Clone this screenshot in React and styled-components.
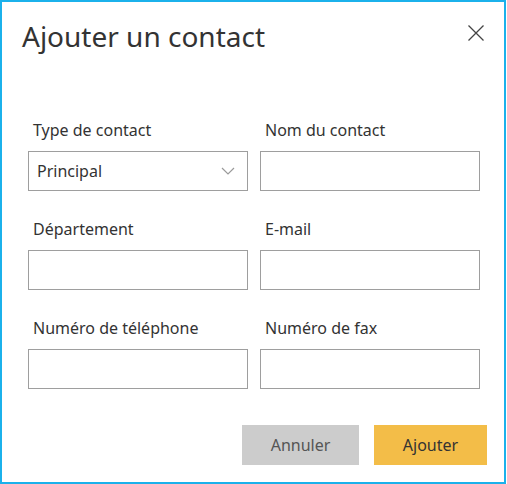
import React from 'react'
import styled, { createGlobalStyle } from 'styled-components'

const GlobalStyle = createGlobalStyle`
  body {
    margin: 0;
    background: #ffffff;
    font-family: "Noto Sans", "Liberation Sans", sans-serif;
    color: #333333;
  }
`;

const Dialog = styled.div`
  box-sizing: border-box;
  width: 506px;
  height: 484px;
  border: 2px solid #1bb1eb;
  background: #ffffff;
  display: flex;
  flex-direction: column;
`;

const Header = styled.div`
  display: flex;
  justify-content: space-between;
  align-items: flex-start;
  padding: 14px 19px 0 20px;
`;

const Title = styled.h2`
  margin: 0;
  font-size: 28px;
  font-weight: 400;
  line-height: 40px;
  color: #333333;
`;

const CloseButton = styled.button`
  border: none;
  background: none;
  padding: 0;
  margin-top: 8px;
  width: 18px;
  height: 18px;
  cursor: pointer;
  display: flex;
  color: #444444;
`;

const Form = styled.div`
  display: grid;
  grid-template-columns: 220px 220px;
  column-gap: 12px;
  row-gap: 27px;
  padding: 63px 0 0 26px;
`;

const Field = styled.div`
  display: flex;
  flex-direction: column;
`;

const Label = styled.label`
  font-size: 16px;
  line-height: 22px;
  padding-left: 5px;
  margin-bottom: 10px;
  color: #333333;
`;

const Input = styled.div`
  box-sizing: border-box;
  height: 40px;
  border: 1px solid #9e9e9e;
  display: flex;
  align-items: center;
  justify-content: space-between;
  padding: 0 12px 0 8px;
  font-size: 16px;
  color: #333333;
`;

const Footer = styled.div`
  display: flex;
  justify-content: flex-end;
  gap: 15px;
  padding: 0 17px 0 0;
  margin-top: auto;
  margin-bottom: 17px;
`;

const Button = styled.button`
  box-sizing: border-box;
  height: 40px;
  width: ${p => p.$w}px;
  border: none;
  background: ${p => p.$primary ? '#f3bd48' : '#cccccc'};
  color: ${p => p.$primary ? '#333333' : '#555555'};
  font-family: inherit;
  font-size: 16px;
  cursor: pointer;
`;

const fields = [
  { label: 'Type de contact', value: 'Principal', select: true },
  { label: 'Nom du contact' },
  { label: 'Département' },
  { label: 'E-mail' },
  { label: 'Numéro de téléphone' },
  { label: 'Numéro de fax' },
];

const Chevron = () => (
  <svg width="14" height="8" viewBox="0 0 14 8" fill="none">
    <path d="M1 1l6 6 6-6" stroke="#9a9a9a" strokeWidth="1.2" />
  </svg>
);

const App = () => {
  return (
    <>
      <GlobalStyle />
      <Dialog>
        <Header>
          <Title>Ajouter un contact</Title>
          <CloseButton aria-label="Fermer">
            <svg width="18" height="18" viewBox="0 0 18 18" fill="none">
              <path d="M1.5 1.5l15 15M16.5 1.5l-15 15" stroke="#444" strokeWidth="1.3" />
            </svg>
          </CloseButton>
        </Header>

        <Form>
          {fields.map(f => (
            <Field key={f.label}>
              <Label>{f.label}</Label>
              <Input>
                <span>{f.value}</span>
                {f.select && <Chevron />}
              </Input>
            </Field>
          ))}
        </Form>

        <Footer>
          <Button $w={117}>Annuler</Button>
          <Button $w={113} $primary>Ajouter</Button>
        </Footer>
      </Dialog>
    </>
  )
}

export default App
